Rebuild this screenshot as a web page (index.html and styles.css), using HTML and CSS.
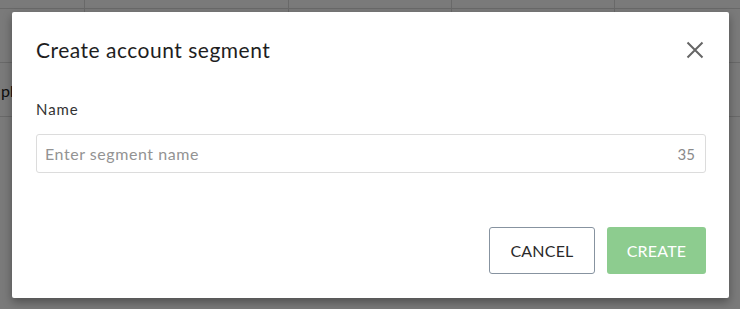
FILE: index.html
```html
<!DOCTYPE html>
<html>
<head>
<meta charset="utf-8">
<link rel="stylesheet" href="styles.css">
</head>
<body>
<div class="page">
  <div class="grid-row head">
    <div class="cell c1"></div><div class="cell c2"></div><div class="cell c3"></div><div class="cell c4"></div><div class="cell c5"></div>
  </div>
  <div class="grid-row">
    <div class="cell c1"></div><div class="cell c2"></div><div class="cell c3"></div><div class="cell c4"></div><div class="cell c5"></div>
  </div>
  <div class="grid-row">
    <div class="cell c1 txt">ph</div><div class="cell c2"></div><div class="cell c3"></div><div class="cell c4"></div><div class="cell c5"></div>
  </div>
</div>
<div class="overlay">
  <div class="modal">
    <div class="modal-header">
      <h2 class="title">Create account segment</h2>
      <button class="close" aria-label="Close">
        <svg width="20" height="20" viewBox="0 0 20 20"><path d="M2.5 2.5 L17.5 17.5 M17.5 2.5 L2.5 17.5" stroke="#666" stroke-width="2" fill="none"/></svg>
      </button>
    </div>
    <div class="modal-body">
      <label class="label">Name</label>
      <div class="field">
        <input class="input" type="text" placeholder="Enter segment name">
        <span class="counter">35</span>
      </div>
    </div>
    <div class="modal-footer">
      <button class="btn btn-cancel">CANCEL</button>
      <button class="btn btn-create">CREATE</button>
    </div>
  </div>
</div>
</body>
</html>
```
FILE: styles.css
```css
* { box-sizing: border-box; }
html, body { margin: 0; padding: 0; }
body {
  width: 740px;
  height: 309px;
  overflow: hidden;
  background: #fff;
  font-family: "Lato", "Liberation Sans", sans-serif;
  position: relative;
}
.page { width: 740px; }
.grid-row {
  display: flex;
  height: 54px;
  border-bottom: 1px solid #dcdcdc;
}
.grid-row.head { height: 9px; }
.cell { border-right: 1px solid #dcdcdc; }
.c1 { width: 85px; }
.c2 { width: 204px; }
.c3 { width: 163px; }
.c4 { width: 163px; }
.c5 { flex: 1; border-right: none; }
.txt {
  font-size: 16px;
  color: #222;
  padding-top: 18px;
  padding-left: 1px;
}
.overlay {
  position: absolute;
  inset: 0;
  background: rgba(0, 0, 0, 0.52);
  padding: 12px 11px 11px 12px;
}
.modal {
  width: 717px;
  height: 286px;
  background: #fff;
  border-radius: 2px;
  box-shadow: 0 4px 10px rgba(0, 0, 0, 0.35);
  padding: 24px 23px 24px 24px;
  display: flex;
  flex-direction: column;
}
.modal-header {
  display: flex;
  align-items: center;
  justify-content: space-between;
  height: 28px;
}
.title {
  margin: 0;
  font-size: 21px;
  line-height: 28px;
  font-weight: 400;
  letter-spacing: 0.5px;
  color: #1e1e1e;
}
.close {
  border: none;
  background: none;
  padding: 0;
  width: 20px;
  height: 20px;
  margin-right: 1px;
  display: flex;
}
.modal-body {
  margin-top: 35px;
  display: flex;
  flex-direction: column;
}
.label {
  font-size: 15px;
  line-height: 20px;
  letter-spacing: 0.9px;
  color: #333;
}
.field {
  margin-top: 15px;
  height: 39px;
  border: 1px solid #dcdcdc;
  border-radius: 3px;
  display: flex;
  align-items: center;
  padding: 0 10px 0 8px;
}
.input {
  flex: 1;
  border: none;
  outline: none;
  font-family: inherit;
  font-size: 16px;
  letter-spacing: 0.55px;
  color: #333;
  padding: 0;
  background: transparent;
}
.input::placeholder { color: #939393; }
.counter {
  font-size: 15px;
  color: #8a8a8a;
}
.modal-footer {
  margin-top: auto;
  display: flex;
  justify-content: flex-end;
  gap: 12px;
}
.btn {
  height: 47px;
  border-radius: 3px;
  font-family: inherit;
  font-size: 16px;
  letter-spacing: 0.2px;
}
.btn-cancel {
  width: 106px;
  background: #fff;
  border: 1px solid #8793a0;
  color: #2a2a2a;
}
.btn-create {
  width: 99px;
  background: #8dcc8f;
  border: none;
  color: #fff;
}
```
